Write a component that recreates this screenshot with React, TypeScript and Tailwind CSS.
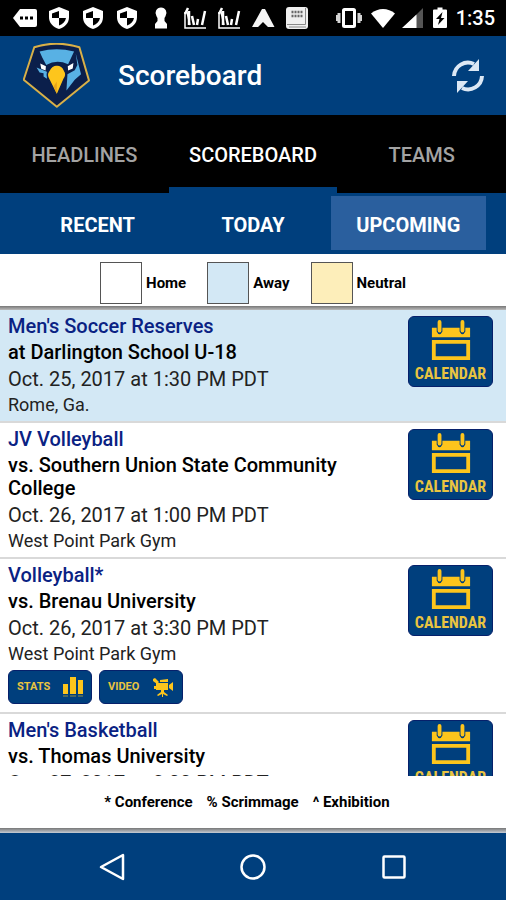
import { useState } from "react";
import clsx from "clsx";

type Site = "home" | "away" | "neutral";

type Game = {
  id: number;
  sport: string;
  opponent: string;
  date: string;
  place: string;
  site: Site;
  hasMedia?: boolean;
};

const games: Game[] = [
  {
    id: 1,
    sport: "Men's Soccer Reserves",
    opponent: "at Darlington School U-18",
    date: "Oct. 25, 2017 at 1:30 PM PDT",
    place: "Rome, Ga.",
    site: "away",
  },
  {
    id: 2,
    sport: "JV Volleyball",
    opponent: "vs. Southern Union State Community College",
    date: "Oct. 26, 2017 at 1:00 PM PDT",
    place: "West Point Park Gym",
    site: "home",
  },
  {
    id: 3,
    sport: "Volleyball*",
    opponent: "vs. Brenau University",
    date: "Oct. 26, 2017 at 3:30 PM PDT",
    place: "West Point Park Gym",
    site: "home",
    hasMedia: true,
  },
  {
    id: 4,
    sport: "Men's Basketball",
    opponent: "vs. Thomas University",
    date: "Oct. 27, 2017 at 2:00 PM PDT",
    place: "",
    site: "home",
  },
];

const siteColors: Record<Site, string> = {
  home: "bg-white",
  away: "bg-[#d3e8f5]",
  neutral: "bg-[#fdeeba]",
};

const legend: { label: string; site: Site }[] = [
  { label: "Home", site: "home" },
  { label: "Away", site: "away" },
  { label: "Neutral", site: "neutral" },
];

const tabs = ["HEADLINES", "SCOREBOARD", "TEAMS"];
const ranges = ["RECENT", "TODAY", "UPCOMING"];

const MessageIcon = () => (
  <svg viewBox="0 0 24 24" className="size-6" fill="#fff">
    <path d="M7 3h15q2 0 2 2v14q0 2-2 2H7L0 12z" />
    <path d="M7 10.500h3v3H7zM12 10.500h3v3h-3zM17 10.500h3v3h-3z" fill="#000" />
  </svg>
);

const ShieldIcon = () => (
  <svg viewBox="0 0 24 24" className="size-6">
    <path d="M12 1 22 5v6c0 6-4 10-10 12C6 21 2 17 2 11V5z" fill="#fff" />
    <path d="M12 5v7H5V7.500zM12 12h7c-.7 3.500-3 6-7 7.500z" fill="#000" />
  </svg>
);

const KeyholeIcon = () => (
  <svg viewBox="0 0 24 24" className="size-6" fill="#fff">
    <path d="M12 1.500a5.500 5.500 0 0 1 4.500 8.700L15.500 12v3l2.500 3v4.500H6V18l2.500-3v-3l-1-1.800A5.500 5.500 0 0 1 12 1.500z" />
  </svg>
);

const ChartIcon = () => (
  <svg viewBox="0 0 24 24" className="size-6" fill="none" stroke="#fff">
    <path d="M2 6v16h21" strokeWidth="1.500" />
    <path d="M2 8 5 2M6 19V5M11 19 9 10M14 19l1-6M19 19l3-14" strokeWidth="2.500" />
    <path d="M4 6l3 13" strokeWidth="1.500" />
  </svg>
);

const PeakIcon = () => (
  <svg viewBox="0 0 24 24" className="size-6" fill="#f4f4f4">
    <path d="M11 3h3l9.500 18H17l-5-5-5 5H1z" />
  </svg>
);

const BookIcon = () => (
  <svg viewBox="0 0 24 24" className="size-6">
    <rect x="1" y="1" width="22" height="22" rx="3" fill="#efefef" />
    <path d="M2 18.500h18.500M20.500 2v16.500M4 21h17" stroke="#888" fill="none" />
    <path d="M6.500 6h11M6.500 10h11" stroke="#666" strokeWidth="2.500" strokeDasharray="2 1" />
  </svg>
);

const VibrateIcon = () => (
  <svg viewBox="0 0 26 24" className="h-6 w-[26px]">
    <path d="M0 9h1.500V7h3v10h-3v-2H0zM26 9h-1.500V7h-3v10h3v-2H26z" fill="#d4d4d4" />
    <rect x="7.500" y="3.500" width="11" height="17" rx="1" fill="none" stroke="#fff" strokeWidth="3" />
  </svg>
);

const WifiIcon = () => (
  <svg viewBox="0 0 26 24" className="h-6 w-[26px]" fill="#fff">
    <path d="M1 7.500C8 1.500 18 1.500 25 7.500L13 22z" />
  </svg>
);

const SignalIcon = () => (
  <svg viewBox="0 0 22 24" className="h-6 w-[22px]">
    <path d="M22 2v20H2z" fill="#555" />
    <path d="M15.500 8.500V22H1z" fill="#fff" />
  </svg>
);

const BatteryIcon = () => (
  <svg viewBox="0 0 14 24" className="h-6 w-[14px]">
    <path d="M4.500 1.500h5v2H13q1 0 1 1V21q0 1-1 1H1q-1 0-1-1V4.500q0-1 1-1h3.500z" fill="#fff" />
    <path d="M9.500 6 3 13h3.500L5 19l6.500-7H8z" fill="#000" />
  </svg>
);

const TeamLogo = () => (
  <svg viewBox="24 14 202 196" className="h-[65px] w-[67px] shrink-0">
    <path
      d="M58 27Q124 5 194 27L223 127 126 206 26 125z"
      fill="#0b1f4b"
      stroke="#d9b048"
      strokeWidth="6"
      strokeLinejoin="round"
    />
    <path
      d="M74 40Q125 26 178 40L160 78Q126 62 94 80L82 58z"
      fill="#58b1e4"
    />
    <path d="M183 46 199 108 180 125 155 157 158 108 180 96 188 80z" fill="#58b1e4" />
    <path d="M65 88 96 101 96 122 86 115 86 105 74 103z" fill="#58b1e4" />
    <path d="M76 76 93 84 92 97 79 92zM176 74 159 84 160 97 174 91z" fill="#fff" />
    <path
      d="M126 80Q143 81 149 97 158 109 147 124L126 172 103 126Q92 110 102 98 110 81 126 80z"
      fill="#fdc51c"
      stroke="#0b1f4b"
      strokeWidth="4"
    />
    <path d="M126 130v37l-10-22z" fill="#e7a51b" />
  </svg>
);

const RefreshIcon = () => (
  <svg viewBox="0 0 34 36" className="h-9 w-[34px]">
    <path
      d="M3 18A14 14 0 0 1 23 6M31 18A14 14 0 0 1 11 30"
      fill="none"
      stroke="#dce8f5"
      strokeWidth="4"
    />
    <path d="M28 1v12H17zM6 35V23h11z" fill="#dce8f5" />
  </svg>
);

const CalendarIcon = () => (
  <svg viewBox="0 0 40 44" className="h-11 w-10">
    <path d="M0 8h5v4q3 6 6 0V8h18v4q3 6 6 0V8h5v10H0z" fill="#fdc51c" />
    <path d="M8 2v9M32 2v9" stroke="#fdc51c" strokeWidth="4" strokeLinecap="round" />
    <path d="M2 23h36v17H2z" fill="none" stroke="#fdc51c" strokeWidth="4" />
  </svg>
);

const BarsIcon = () => (
  <svg viewBox="0 0 20 22" className="h-[22px] w-5">
    <path d="M0 8h5v10H0zM7 1h6v17H7zM15 4h5v14h-5z" fill="#fdc51c" />
    <path d="M0 19h5v2H0zM7 19h6v2H7zM15 19h5v2h-5z" fill="#fdc51c" opacity=".3" />
  </svg>
);

const CameraIcon = () => (
  <svg viewBox="0 0 22 22" className="size-[22px]" fill="#fdc51c">
    <path d="M4 7h12v7H4z" />
    <path d="M17 9l4-3v9l-4-3z" />
    <path d="M1 3l2-1 4 4-2 2-4-3z" />
    <path d="M8 6V4l8-1v3z" />
    <path d="M2 10h2v3H2z" />
    <path d="M9 14h3v2l4 3-1 1-4-2v3h-1v-3l-4 2-1-1 4-3z" />
  </svg>
);

const StatusBar = () => (
  <div className="flex h-9 shrink-0 items-center justify-between bg-black pr-[11px] pl-[13px] text-white">
    <div className="flex gap-[10px]">
      <MessageIcon />
      <ShieldIcon />
      <ShieldIcon />
      <ShieldIcon />
      <KeyholeIcon />
      <ChartIcon />
      <ChartIcon />
      <PeakIcon />
      <BookIcon />
    </div>
    <div className="flex items-center">
      <VibrateIcon />
      <span className="ml-2">
        <WifiIcon />
      </span>
      <span className="ml-[5px]">
        <SignalIcon />
      </span>
      <span className="ml-[10px]">
        <BatteryIcon />
      </span>
      <span className="ml-[9px] text-xl leading-6 font-medium">1:35</span>
    </div>
  </div>
);

const GameRow = ({ game }: { game: Game }) => (
  <li
    className={clsx(
      "flex items-start justify-between border-b-2 border-[#d9d9d9] pr-[13px] pl-2",
      siteColors[game.site],
    )}
  >
    <div className={clsx("min-w-0 flex-1 pt-1 pr-5", game.hasMedia ? "pb-2" : "pb-1")}>
      <h2 className="text-xl leading-6 font-medium text-[#0a2283]">
        {game.sport}
      </h2>
      <p className="mt-[3px] text-xl leading-[23px] font-medium">
        {game.opponent}
      </p>
      <p className="mt-[3px] text-xl leading-6 text-[#222]">{game.date}</p>
      {game.place && (
        <p className="mt-[2px] text-lg leading-6 text-[#222]">{game.place}</p>
      )}
      {game.hasMedia && (
        <div className="mt-1 flex gap-[7px]">
          <button className="flex h-[34px] w-[84px] items-center justify-between rounded-md border border-[#06206b] bg-[#003f7d] px-2 text-[11px] font-bold text-[#e9c440]">
            STATS
            <BarsIcon />
          </button>
          <button className="flex h-[34px] w-[84px] items-center justify-between rounded-md border border-[#06206b] bg-[#003f7d] px-2 text-[11px] font-bold text-[#e9c440]">
            VIDEO
            <CameraIcon />
          </button>
        </div>
      )}
    </div>
    <button className="mt-[6px] flex h-[71px] w-[85px] shrink-0 flex-col items-center rounded-md border border-[#06206b] bg-[#003f7d] pt-[3px] font-['Roboto_Condensed','Liberation_Sans_Narrow',Roboto,sans-serif] text-base leading-6 font-bold text-[#e9c440]">
      <CalendarIcon />
      CALENDAR
    </button>
  </li>
);

const App = () => {
  const [tab, setTab] = useState("SCOREBOARD");
  const [range, setRange] = useState("UPCOMING");

  return (
    <div className="flex h-screen flex-col overflow-hidden bg-white font-[Roboto,sans-serif] text-black">
      <StatusBar />

      <header className="flex h-[79px] shrink-0 items-center justify-between bg-[#003f7d] pr-[21px] pl-[23px]">
        <div className="flex items-center gap-7">
          <TeamLogo />
          <h1 className="text-[28px] leading-9 font-medium text-white">
            Scoreboard
          </h1>
        </div>
        <button aria-label="Refresh">
          <RefreshIcon />
        </button>
      </header>

      <nav className="grid h-[78px] shrink-0 grid-cols-3 bg-black">
        {tabs.map((name) => (
          <button
            key={name}
            onClick={() => setTab(name)}
            className={clsx(
              "border-y-6 border-t-transparent pt-[2px] text-xl font-medium",
              name === tab
                ? "border-b-[#003f7d] text-white"
                : "border-b-transparent text-[#a3a3a3]",
            )}
          >
            {name}
          </button>
        ))}
      </nav>

      <div className="grid shrink-0 grid-cols-3 bg-[#003f7d] px-5 pt-[3px] pb-1">
        {ranges.map((name) => (
          <button
            key={name}
            onClick={() => setRange(name)}
            className={clsx(
              "h-[54px] pt-1 text-xl font-bold text-white",
              name === range && "bg-[#2a5f9e]",
            )}
          >
            {name}
          </button>
        ))}
      </div>

      <div className="flex h-[52px] shrink-0 items-center justify-center gap-[21px] pt-[6px]">
        {legend.map(({ label, site }) => (
          <div key={label} className="flex items-center gap-1">
            <span
              className={clsx("size-[42px] border border-[#555]", siteColors[site])}
            />
            <span className="text-[15px] leading-5 font-bold">{label}</span>
          </div>
        ))}
      </div>

      <div className="h-1 shrink-0 bg-linear-to-b from-[#777] to-[#bbb]" />

      <ul className="min-h-0 flex-1 overflow-hidden">
        {games.map((game) => (
          <GameRow key={game.id} game={game} />
        ))}
      </ul>

      <footer className="flex h-[52px] shrink-0 items-center justify-center gap-[14px] pr-3 text-[15px] font-bold">
        <span>* Conference</span>
        <span>% Scrimmage</span>
        <span>^ Exhibition</span>
      </footer>

      <div className="h-[5px] shrink-0 bg-linear-to-b from-[#777] to-[#c5ccd6]" />

      <div className="grid h-[67px] shrink-0 grid-cols-3 place-items-center bg-[#003f7d] px-[42px]">
        <button aria-label="Back">
          <svg viewBox="0 0 28 28" className="size-7" fill="none" stroke="#fff" strokeWidth="2.500">
            <path d="M25 2v24L3 14z" strokeLinejoin="round" />
          </svg>
        </button>
        <button aria-label="Home">
          <svg viewBox="0 0 28 28" className="size-7" fill="none" stroke="#fff" strokeWidth="2.500">
            <circle cx="14" cy="14" r="11.500" />
          </svg>
        </button>
        <button aria-label="Overview">
          <svg viewBox="0 0 28 28" className="size-7" fill="none" stroke="#fff" strokeWidth="2.500">
            <rect x="3.500" y="3.500" width="21" height="21" rx="1" />
          </svg>
        </button>
      </div>
    </div>
  );
};

export default App;
